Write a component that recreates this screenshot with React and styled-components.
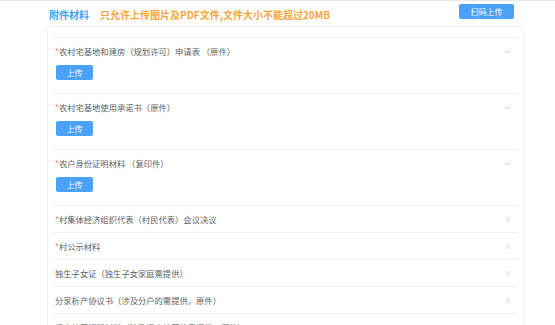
import React from 'react';
import styled, { createGlobalStyle } from 'styled-components';

const GlobalStyle = createGlobalStyle`
  html, body {
    margin: 0;
    padding: 0;
    background: #fff;
  }
  body {
    font-family: "Noto Sans CJK SC", "Noto Sans", sans-serif;
  }
`;

const TopLine = styled.div`
  height: 1px;
  background: #e9e9e9;
`;

const Page = styled.div`
  padding: 0 30px 0 47px;
`;

const Header = styled.div`
  display: flex;
  justify-content: space-between;
  align-items: flex-start;
  height: 25px;
  padding-right: 11px;
`;

const TitleGroup = styled.div`
  display: flex;
  align-items: center;
  padding: 7px 0 0 2px;
  font-size: 10px;
  line-height: 13px;
  font-weight: 700;
`;

const Title = styled.span`
  color: #409eff;
`;

const Notice = styled.span`
  color: #f7a53a;
  margin-left: 11px;
`;

const ScanButton = styled.button`
  margin-top: 3px;
  width: 55px;
  height: 15px;
  padding: 0;
  border: none;
  border-radius: 2px;
  background: #4ba0f7;
  color: #fff;
  font-family: inherit;
  font-size: 8px;
  line-height: 15px;
`;

const Card = styled.div`
  border: 1px solid #ebeef5;
  border-bottom: none;
  border-radius: 5px 5px 0 0;
  padding: 10px 6px 0 5px;
  height: 320px;
  box-sizing: border-box;
  overflow: hidden;
`;

const Item = styled.div`
  border-top: 1px solid #eef0f4;
`;

const ItemHead = styled.div`
  display: flex;
  align-items: center;
  justify-content: space-between;
  height: 26px;
  padding: 0 7px 0 2px;
  font-size: 8.3px;
  color: #606266;
`;

const Star = styled.span`
  color: #f56c6c;
`;

const ItemBody = styled.div`
  padding: 1px 0 13px 3px;
`;

const UploadButton = styled.button`
  display: block;
  width: 37px;
  height: 15px;
  padding: 0;
  border: none;
  border-radius: 2px;
  background: #4ba0f7;
  color: #fff;
  font-family: inherit;
  font-size: 8px;
  line-height: 15px;
`;

const Chevron = ({ open }) => (
  <svg width="7" height="7" viewBox="0 0 7 7" fill="none">
    {open ? (
      <polyline points="1,2.5 3.5,5 6,2.5" stroke="#b8bcc4" strokeWidth="0.9" />
    ) : (
      <polyline points="2.5,1 5,3.5 2.5,6" stroke="#b8bcc4" strokeWidth="0.9" />
    )}
  </svg>
);

const items = [
  { label: '农村宅基地和建房（规划许可）申请表 （原件）', required: true, open: true },
  { label: '农村宅基地使用承诺书（原件）', required: true, open: true },
  { label: '农户身份证明材料 （复印件）', required: true, open: true },
  { label: '村集体经济组织代表（村民代表）会议决议', required: true },
  { label: '村公示材料', required: true },
  { label: '独生子女证（独生子女家庭需提供）' },
  { label: '分家析产协议书（涉及分户的需提供，原件）' },
  { label: '旧房处置证明材料（涉及旧房处置的需提供，原件）' },
];

const App = () => {
  return (
    <>
      <GlobalStyle />
      <TopLine />
      <Page>
        <Header>
          <TitleGroup>
            <Title>附件材料</Title>
            <Notice>只允许上传图片及PDF文件,文件大小不能超过20MB</Notice>
          </TitleGroup>
          <ScanButton>扫码上传</ScanButton>
        </Header>
        <Card>
          {items.map((it) => (
            <Item key={it.label}>
              <ItemHead>
                <span>
                  {it.required && <Star>*</Star>}
                  {it.label}
                </span>
                <Chevron open={it.open} />
              </ItemHead>
              {it.open && (
                <ItemBody>
                  <UploadButton>上传</UploadButton>
                </ItemBody>
              )}
            </Item>
          ))}
        </Card>
      </Page>
    </>
  );
};

export default App;
